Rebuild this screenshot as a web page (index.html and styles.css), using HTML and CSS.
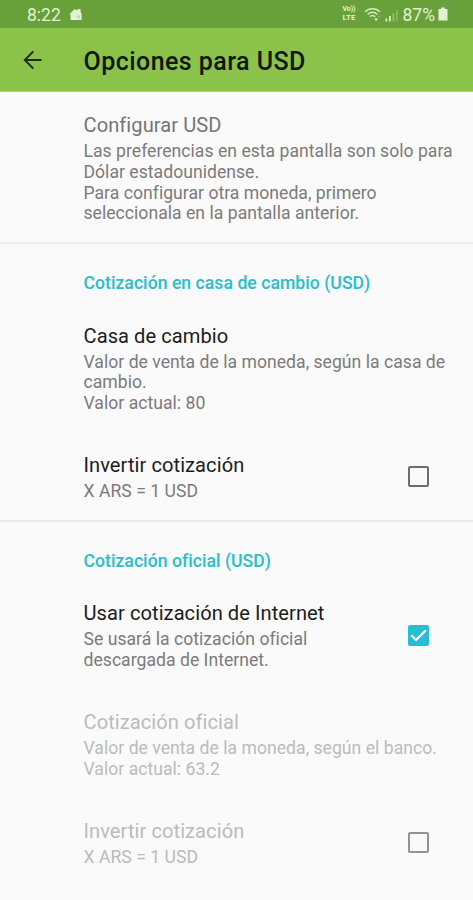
FILE: index.html
```html
<!DOCTYPE html>
<html lang="es">
<head>
    <meta charset="UTF-8">
    <meta name="viewport" content="width=device-width, initial-scale=1.0">
    <title>Opciones para USD</title>
    <link rel="stylesheet" href="styles.css">
</head>
<body>

<div class="status-bar">
    <span class="time">8:22</span>
    <svg class="home-icon" width="14" height="13" viewBox="0 0 14 13">
        <path d="M5.5 1.2 L8.6 2.2 V1 H11.6 V3.8 L12.6 6 V12 H1.6 V7 L0.4 6.2 Z" fill="#e3f1d4"/>
        <path d="M7.5 8.2h3M9 9.9h1.5" stroke="#9cc47a" stroke-width="0.9"/>
    </svg>
    <div class="status-icons">
        <span class="volte"><span class="vo">Vo))</span><span>LTE</span></span>
        <svg class="wifi" width="18" height="15" viewBox="0 0 18 15" fill="none" stroke="#d3e8bf">
            <path d="M1 4.8 C5 0.6 12 0.6 16 4.8" stroke-width="1.5"/>
            <path d="M3.6 7.4 C6.3 4.6 10.7 4.6 13.4 7.4" stroke-width="1.5"/>
            <path d="M5.8 9.8 C7.5 8.2 9.5 8.2 11.2 9.8" stroke-width="1.5"/>
            <path d="M10.2 11.4 L14 11.4 L12.1 14.2 Z" fill="#e3f1d4" stroke="none"/>
            <path d="M13.4 10.2 L15 8.2 L16.6 10.2 Z" fill="#8fbb6b" stroke="none"/>
        </svg>
        <svg class="signal" width="14" height="13" viewBox="0 0 14 13">
            <rect x="0.5" y="9.5" width="1.7" height="3" fill="#e3f1d4"/>
            <rect x="4" y="7" width="1.7" height="5.5" fill="#e3f1d4"/>
            <rect x="7.5" y="4" width="1.7" height="8.5" fill="#94be73"/>
            <rect x="11" y="1" width="1.7" height="11.5" fill="#8ab866"/>
        </svg>
        <span class="percent">87%</span>
        <svg class="battery" width="10" height="14" viewBox="0 0 10 14">
            <path d="M3 0.5 H7 V2 H9.5 V13.5 H0.5 V2 H3 Z" fill="#e3f1d4"/>
        </svg>
    </div>
</div>

<div class="toolbar">
    <svg class="back" width="20" height="20" viewBox="0 0 20 20" fill="none" stroke="#1f2c12" stroke-width="2">
        <path d="M18.5 10 H2.5 M10.3 1.4 L1.8 10 L10.3 18.6"/>
    </svg>
    <h1>Opciones para USD</h1>
</div>

<div class="section intro">
    <div class="item">
        <div class="text">
            <h3>Configurar USD</h3>
            <p>Las preferencias en esta pantalla son solo para Dólar estadounidense.<br>Para configurar otra moneda, primero seleccionala en la pantalla anterior.</p>
        </div>
    </div>
</div>

<div class="section">
    <h2>Cotización en casa de cambio (USD)</h2>
    <div class="item">
        <div class="text">
            <h3>Casa de cambio</h3>
            <p>Valor de venta de la moneda, según la casa de cambio.<br>Valor actual: 80</p>
        </div>
    </div>
    <div class="item">
        <div class="text">
            <h3>Invertir cotización</h3>
            <p>X ARS = 1 USD</p>
        </div>
        <span class="checkbox"></span>
    </div>
</div>

<div class="section">
    <h2>Cotización oficial (USD)</h2>
    <div class="item">
        <div class="text">
            <h3>Usar cotización de Internet</h3>
            <p>Se usará la cotización oficial descargada de Internet.</p>
        </div>
        <span class="checkbox checked">
            <svg width="21" height="21" viewBox="0 0 21 21" fill="none" stroke="#fff" stroke-width="2.2">
                <path d="M3.2 10.2 L8 15 L17.8 5.2"/>
            </svg>
        </span>
    </div>
    <div class="item disabled">
        <div class="text">
            <h3>Cotización oficial</h3>
            <p>Valor de venta de la moneda, según el banco.<br>Valor actual: 63.2</p>
        </div>
    </div>
    <div class="item disabled">
        <div class="text">
            <h3>Invertir cotización</h3>
            <p>X ARS = 1 USD</p>
        </div>
        <span class="checkbox"></span>
    </div>
</div>

</body>
</html>
```

FILE: styles.css
```css
* {
    margin: 0;
    padding: 0;
    box-sizing: border-box;
}

body {
    font-family: Roboto, sans-serif;
    background: #fafafa;
    height: 900px;
    overflow: hidden;
}

.status-bar {
    height: 28px;
    padding: 0 25px 0 27px;
    background: #68a039;
    color: #e3f1d4;
    display: flex;
    align-items: center;
}

.time, .percent {
    font-size: 17.5px;
    line-height: 28px;
    padding-top: 1px;
}

.percent {
    margin-left: -1px;
}

.home-icon {
    margin-left: 8px;
}

.status-icons {
    display: flex;
    align-items: center;
    margin-left: auto;
}

.volte {
    display: flex;
    flex-direction: column;
    gap: 1px;
    font-size: 8px;
    font-weight: 700;
    line-height: 8px;
    width: 15px;
}

.vo {
    font-size: 7px;
    line-height: 7px;
    letter-spacing: -0.1px;
}

.wifi {
    margin-left: 6px;
}

.signal {
    margin: 2px 5px 0 3px;
}

.battery {
    margin-left: 3px;
}

.toolbar {
    height: 64px;
    padding-left: 23px;
    background: #8bc34a;
    border-bottom: 1px solid #a9cf7c;
    display: flex;
    align-items: center;
}

.toolbar h1 {
    margin-left: 40.5px;
    font-size: 25px;
    font-weight: 500;
    letter-spacing: 0.45px;
    color: #10160a;
    padding-top: 4px;
}

.section {
    border-bottom: 2px solid #ebebeb;
}

.section:last-child {
    border-bottom: none;
}

.section h2 {
    padding: 29px 20px 10px 83.5px;
    font-size: 17.6px;
    font-weight: 500;
    line-height: 20.6px;
    letter-spacing: 0.04px;
    color: #26bfcb;
}

.item {
    padding: 21.1px 18px 19.5px 83.5px;
    display: flex;
    align-items: center;
}

.item:last-child {
    padding-bottom: 17.8px;
}

.text {
    flex: 1;
}

.item h3 {
    margin-bottom: 3.2px;
    font-size: 20.1px;
    font-weight: 400;
    line-height: 23.8px;
    letter-spacing: 0.06px;
    color: #1c1c1c;
}

.item p {
    font-size: 17.6px;
    line-height: 20.65px;
    letter-spacing: 0.02px;
    color: #7b7b7b;
}

.intro .item {
    padding-top: 22.3px;
    padding-bottom: 18.1px;
}

.intro h3 {
    color: #757575;
}

.disabled h3, .disabled p {
    color: #bbb;
}

.checkbox {
    width: 21px;
    height: 21px;
    margin: 0 26px 3px 20px;
    border: 2px solid #6c6c6c;
    border-radius: 2px;
}

.disabled .checkbox {
    border-color: #929292;
}

.checked {
    border: none;
    background: #24bfd0;
}

.checked svg {
    display: block;
}
```
